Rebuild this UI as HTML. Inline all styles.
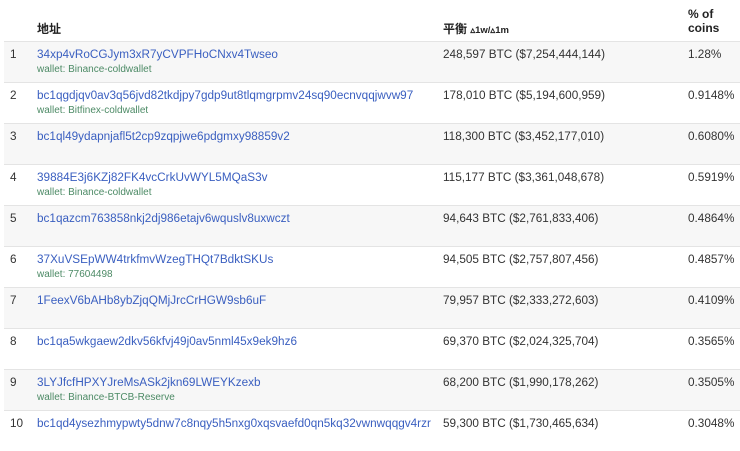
<!DOCTYPE html>
<html><head><meta charset="utf-8"><style>
body{margin:0;background:#fff;font-family:"Liberation Sans","Noto Sans CJK SC",sans-serif;font-size:11.75px;color:#333;width:740px;height:442px;overflow:hidden;position:relative}
.h{position:absolute;font-weight:bold;color:#222;font-size:12px}
.row{position:absolute;left:4px;width:736px;height:41px;border-top:1px solid #e4e4e4;box-sizing:border-box}
.g{background:#f7f7f7}
.row span{position:absolute;top:6px;white-space:nowrap}
.n{left:6px}.a{left:33px;color:#3a5fc0}.w{left:33px;top:22px!important;font-size:10px;color:#4c8a65}.b{left:439px}.p{left:684px}
</style></head><body>
<div class="h" style="left:37px;top:20px">地址</div>
<div class="h" style="left:443px;top:20px">平衡 <span style="font-size:9.5px">▵1w/▵1m</span></div>
<div class="h" style="left:688px;top:7px;line-height:14px">% of<br>coins</div>
<div class="row g" style="top:41px"><span class="n">1</span><span class="a">34xp4vRoCGJym3xR7yCVPFHoCNxv4Twseo</span><span class="w">wallet: Binance-coldwallet</span><span class="b">248,597 BTC ($7,254,444,144)</span><span class="p">1.28%</span></div>
<div class="row" style="top:82px"><span class="n">2</span><span class="a">bc1qgdjqv0av3q56jvd82tkdjpy7gdp9ut8tlqmgrpmv24sq90ecnvqqjwvw97</span><span class="w">wallet: Bitfinex-coldwallet</span><span class="b">178,010 BTC ($5,194,600,959)</span><span class="p">0.9148%</span></div>
<div class="row g" style="top:123px"><span class="n">3</span><span class="a">bc1ql49ydapnjafl5t2cp9zqpjwe6pdgmxy98859v2</span><span class="b">118,300 BTC ($3,452,177,010)</span><span class="p">0.6080%</span></div>
<div class="row" style="top:164px"><span class="n">4</span><span class="a">39884E3j6KZj82FK4vcCrkUvWYL5MQaS3v</span><span class="w">wallet: Binance-coldwallet</span><span class="b">115,177 BTC ($3,361,048,678)</span><span class="p">0.5919%</span></div>
<div class="row g" style="top:205px"><span class="n">5</span><span class="a">bc1qazcm763858nkj2dj986etajv6wquslv8uxwczt</span><span class="b">94,643 BTC ($2,761,833,406)</span><span class="p">0.4864%</span></div>
<div class="row" style="top:246px"><span class="n">6</span><span class="a">37XuVSEpWW4trkfmvWzegTHQt7BdktSKUs</span><span class="w">wallet: 77604498</span><span class="b">94,505 BTC ($2,757,807,456)</span><span class="p">0.4857%</span></div>
<div class="row g" style="top:287px"><span class="n">7</span><span class="a">1FeexV6bAHb8ybZjqQMjJrcCrHGW9sb6uF</span><span class="b">79,957 BTC ($2,333,272,603)</span><span class="p">0.4109%</span></div>
<div class="row" style="top:328px"><span class="n">8</span><span class="a">bc1qa5wkgaew2dkv56kfvj49j0av5nml45x9ek9hz6</span><span class="b">69,370 BTC ($2,024,325,704)</span><span class="p">0.3565%</span></div>
<div class="row g" style="top:369px"><span class="n">9</span><span class="a">3LYJfcfHPXYJreMsASk2jkn69LWEYKzexb</span><span class="w">wallet: Binance-BTCB-Reserve</span><span class="b">68,200 BTC ($1,990,178,262)</span><span class="p">0.3505%</span></div>
<div class="row" style="top:410px"><span class="n">10</span><span class="a">bc1qd4ysezhmypwty5dnw7c8nqy5h5nxg0xqsvaefd0qn5kq32vwnwqqgv4rzr</span><span class="b">59,300 BTC ($1,730,465,634)</span><span class="p">0.3048%</span></div>
</body></html>
